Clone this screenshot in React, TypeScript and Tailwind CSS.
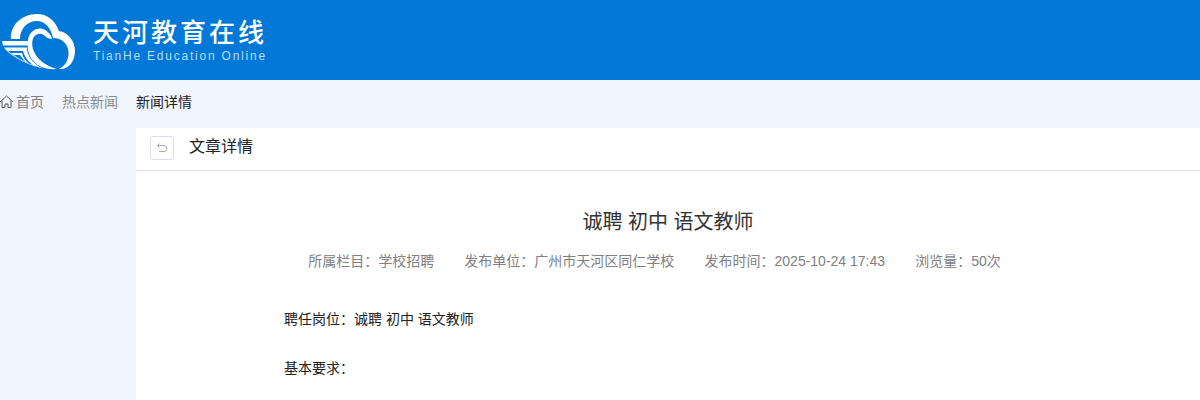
import React from "react";

function Logo() {
  return (
    <svg width="80" height="80" viewBox="0 0 80 80" className="shrink-0">
      <path fill="#fff" d="M11 39 C10 25 22 14 37 14 C47 14 55 20 59 31 C68 32 75 41 75 51 C75 62 68 70 59 69 C65 66 69 60 68.5 52 C68 44 62 38 53 38 C51 28 45 21 37 21 C27 21 20 29 20 39 Z" />
      <path fill="#fff" d="M28 40 C29 32 36 27 43 29 C48 31 51 35 52 39 L47 38 C45 35 41 33 38 34 C33 35 31 42 33 49 C36 59 46 66 57 69 C45 70 36 66 31 58 C28 53 27 46 28 40 Z" />
      <path fill="#fff" d="M2 41 H29 L28 45.5 H3 Z" />
      <path fill="#fff" d="M4 47.5 H27 C27 56 33 64 43 68.5 C28 65 14 58 6 50 Z" />
      <path fill="#0078d7" d="M8 51 H23 C25 58 29 62 33 65 C24 62 15 57 8 51 Z" />
      <path fill="#fff" d="M11 53 H22 C23 58 26 61 29 63.5 C23 61 16 57 11 53 Z" />
      <path fill="#0078d7" d="M14 55 H20 C21 57 23 59 25 61 C21 60 17 57 14 55 Z" />
    </svg>
  );
}

export default function App() {
  return (
    <div className="h-[400px] overflow-hidden bg-[#f0f5ff] font-['Liberation_Sans','Noto_Sans_CJK_SC',sans-serif]">
      <header className="h-20 bg-[#0078d7] flex items-center">
        <Logo />
        <div className="ml-[13px] flex flex-col">
          <div className="text-[26px] leading-[32px] tracking-[3px] text-white font-['Noto_Sans_CJK_SC',sans-serif] font-medium -mt-[1px] mb-[1px]">天河教育在线</div>
          <div className="text-[12px] leading-[16px] tracking-[1.78px] text-[#b9dcf5]">TianHe Education Online</div>
        </div>
      </header>
      <nav className="h-12 flex items-center text-sm pb-1">
        <div className="flex items-center text-[#808080]">
          <svg width="14" height="14" viewBox="0 0 14 14" fill="none" stroke="#555" strokeWidth="1" className="mr-[2px]">
            <path d="M0 7 L6.5 1 L13 7 M2 5.5 V12.5 H5 V9 H8 V12.5 H11 V5.5" />
          </svg>
          <span>首页</span>
        </div>
        <span className="ml-[18px] text-[#8c8c8c]">热点新闻</span>
        <span className="ml-[18px] text-[#222]">新闻详情</span>
      </nav>
      <main className="ml-[136px] bg-white h-[272px]">
        <div className="h-[43px] border-b border-[#e8e8e8] flex items-center pl-[14px] pb-[2px]">
          <button className="w-6 h-6 rounded-[3px] border border-[#dcdfe6] flex items-center justify-center">
            <svg width="12" height="12" viewBox="0 0 12 12" fill="none" stroke="#aaa" strokeWidth="1">
              <path d="M3.5 1.5 L1.5 3.5 L3.5 5.5 M1.5 3.5 H8 A3 3 0 0 1 8 9.5 H3" />
            </svg>
          </button>
          <span className="ml-[15px] mb-[2px] text-base text-[#222]">文章详情</span>
        </div>
        <h1 className="mt-[36px] text-center text-[20px] leading-[30px] text-[#333]">诚聘 初中 语文教师</h1>
        <div className="mt-[14px] flex justify-center gap-[30.2px] text-sm leading-5 text-[#808080] pr-[27px]">
          <span>所属栏目：学校招聘</span>
          <span>发布单位：广州市天河区同仁学校</span>
          <span>发布时间：2025-10-24 17:43</span>
          <span>浏览量：50次</span>
        </div>
        <div className="mt-[38px] ml-[148px] text-sm leading-5 text-[#222]">
          <p>聘任岗位：诚聘 初中 语文教师</p>
          <p className="mt-[29px]">基本要求：</p>
        </div>
      </main>
    </div>
  );
}
